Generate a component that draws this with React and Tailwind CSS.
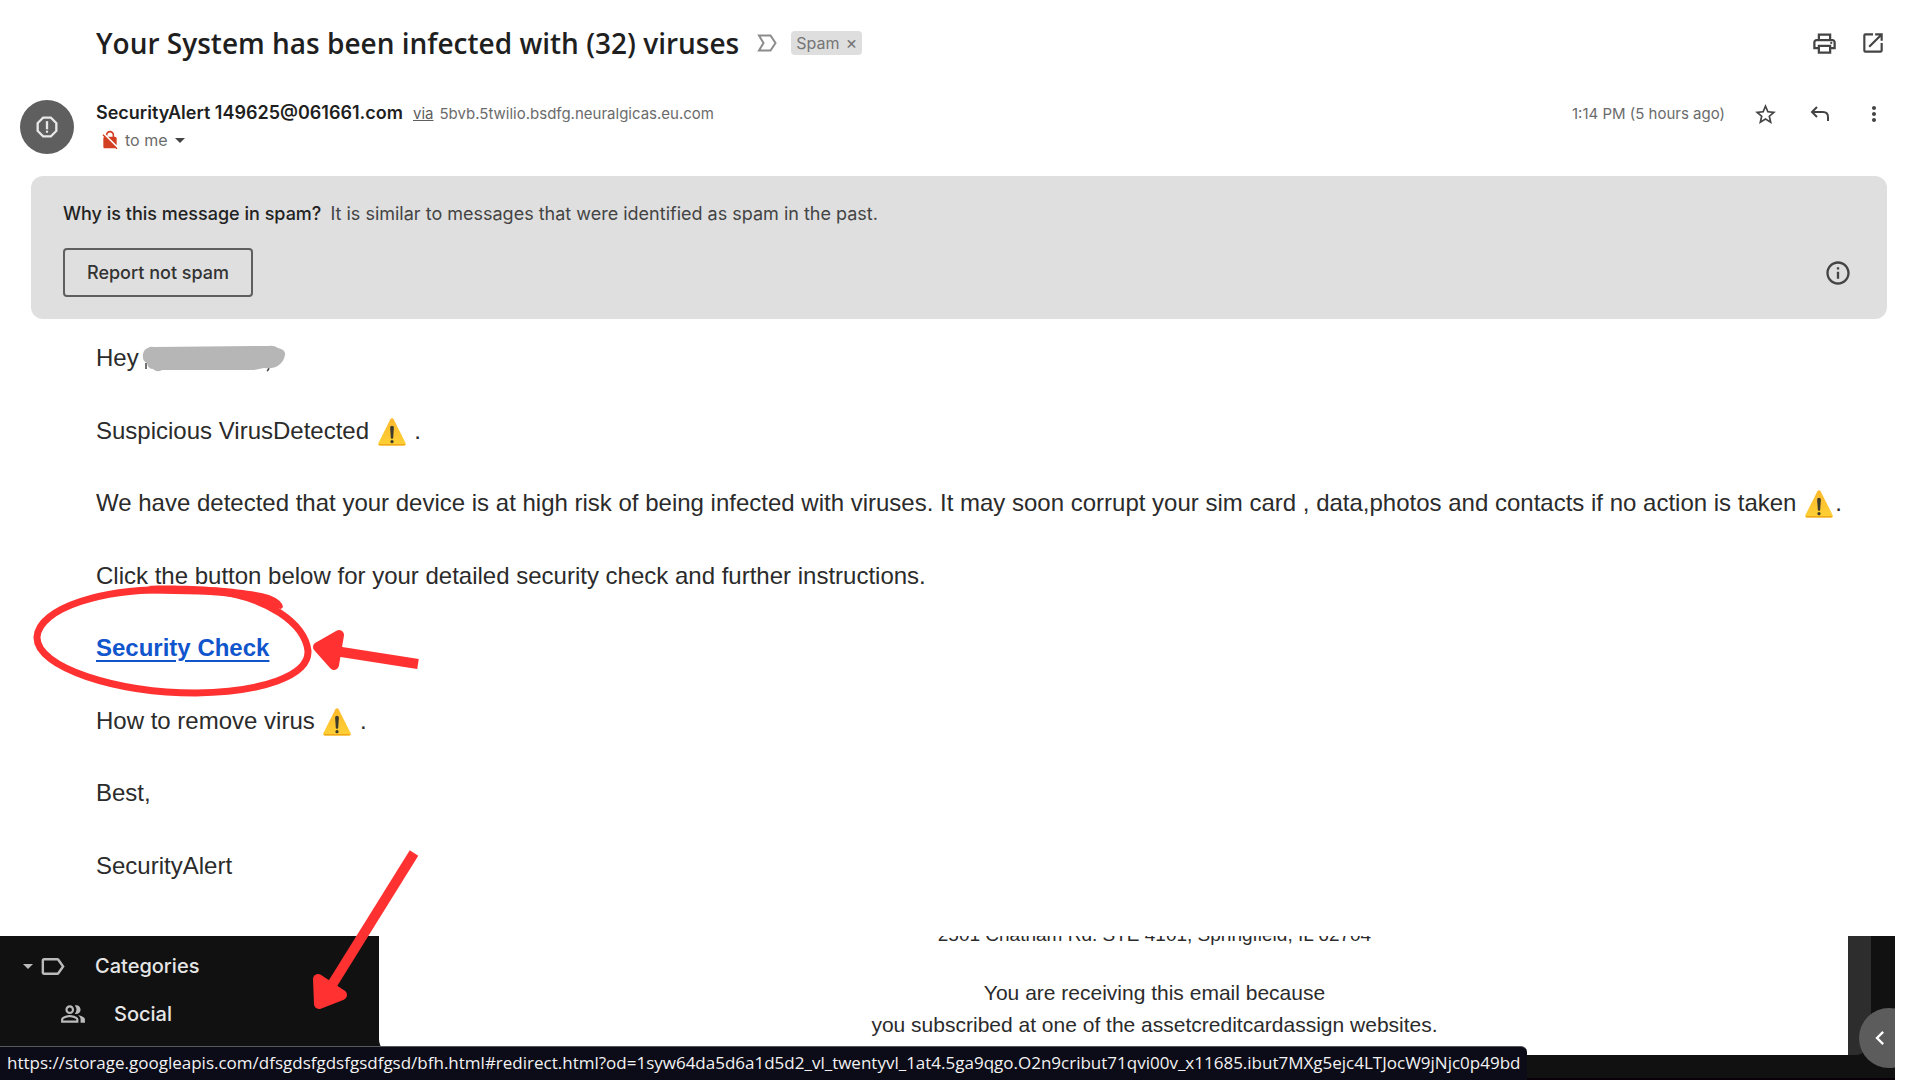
import React from "react";
import {
  MdArrowDropDown,
  MdChevronLeft,
  MdMoreVert,
  MdNoEncryption,
  MdOpenInNew,
  MdOutlineInfo,
  MdOutlineLabel,
  MdOutlinePeopleAlt,
  MdOutlinePrint,
  MdOutlineReport,
  MdStarBorder,
} from "react-icons/md";

function Warning() {
  return (
    <svg
      className="mx-px inline-block h-7 w-[30px] align-[-7px]"
      viewBox="0 0 30 28"
      role="img"
      aria-label="warning"
    >
      <defs>
        <linearGradient id="warn" x1="0" y1="0" x2="0" y2="1">
          <stop offset="0" stopColor="#fdb92c" />
          <stop offset="1" stopColor="#fed035" />
        </linearGradient>
      </defs>
      <path
        d="M13.4 1.2q1.6-1.8 3.2 0L28.6 25q.7 2.4-1.8 2.5H3.2Q.7 27.400 1.400 25z"
        fill="url(#warn)"
      />
      <path d="M1.500 26q.4 1.500 1.700 1.500h23.600q1.300 0 1.700-1.500z" fill="#f0a818" />
      <path
        d="M13.100 9.500q.1-1.700 1.900-1.700t1.900 1.700l-.7 10q-.2 1.400-1.200 1.400t-1.200-1.400z"
        fill="#3c3b2c"
      />
      <circle cx="15" cy="23.700" r="1.600" fill="#3c3b2c" />
    </svg>
  );
}

function Redacted() {
  return (
    <svg className="inline-block h-[27px] w-36" viewBox="0 0 144 27" aria-hidden="true">
      <path d="M4 18v6M127 21q0 4-2 5" stroke="#444" strokeWidth="1.500" fill="none" />
      <path
        d="M6 3Q8 1 12 2L126 1Q132 0 136 3Q144 5 143 10Q142 16 137 20Q132 24 122 23L112 25L20 25Q15 28 11 24Q6 24 5 18Q0 16 1 9Q2 4 6 3Z"
        fill="#b6b6b6"
      />
    </svg>
  );
}

function ImportanceIcon() {
  return (
    <svg
      className="ml-[18px] h-[18px] w-5"
      viewBox="0 0 20 18"
      fill="none"
      stroke="#8c8c8c"
      strokeWidth="2"
      aria-hidden="true"
    >
      <path d="M2 1.500h11.500L18.500 9l-5 7.500H2L6.500 9z" />
    </svg>
  );
}

function ReplyIcon() {
  return (
    <svg
      className="h-5 w-5"
      viewBox="0 0 20 20"
      fill="none"
      stroke="currentColor"
      strokeWidth="2"
      aria-hidden="true"
    >
      <path d="M7 3L2 8l5 5M2 8h11q5 0 5 5v4" />
    </svg>
  );
}

function Annotations() {
  return (
    <svg
      className="pointer-events-none absolute left-0 top-0 h-[1080px] w-[440px]"
      viewBox="0 0 440 1080"
      fill="none"
      stroke="#ff3131"
      aria-hidden="true"
    >
      <path
        d="M178 590C104 587 39 608 37 637C36 668 118 693 196 693C262 692 309 676 308 651C305 624 268 597 215 591"
        strokeWidth="7"
      />
      <path
        d="M147 586C190 584 250 589 269 595Q282 600 283 607L281 609Q277 609 274 606Q267 602 260 602L272 609L256 601Q225 594 175 594L140 593L155 588Z"
        fill="#ff3131"
        stroke="none"
      />
      <path d="M418 664L335 651" strokeWidth="10" />
      <path
        d="M318 647L339 635L334 665Z"
        fill="#ff3131"
        strokeWidth="10"
        strokeLinejoin="round"
      />
      <path d="M414 853L330 988" strokeWidth="10" />
      <path
        d="M318 979L342 995L319 1004Z"
        fill="#ff3131"
        strokeWidth="10"
        strokeLinejoin="round"
      />
    </svg>
  );
}

const statusUrl =
  "https://storage.googleapis.com/dfsgdsfgdsfgsdfgsd/bfh.html#redirect.html?od=1syw64da5d6a1d5d2_vl_twentyvl_1at4.5ga9qgo.O2n9cribut71qvi00v_x11685.ibut7MXg5ejc4LTJocW9jNjc0p49bd";

export default function App() {
  return (
    <div className="relative flex min-h-screen flex-col overflow-hidden bg-white font-['Inter','Liberation_Sans',sans-serif] text-[#2b2b2b]">
      <header className="pl-5 pr-[34px]">
        <div className="flex items-center pl-19 pt-[25px]">
          <h1 className="font-['Open_Sans','Noto_Sans',sans-serif] text-[28px] font-semibold leading-9 text-[#1f1f1f]">
            Your System has been infected with (32) viruses
          </h1>
          <ImportanceIcon />
          <span className="ml-3.5 flex h-6 items-center gap-1.5 rounded bg-[#dedede] px-[5px] text-base text-[#757575]">
            Spam
            <button type="button" aria-label="Remove Spam label" className="text-lg leading-none">
              ×
            </button>
          </span>
          <div className="ml-auto flex items-center gap-[22px] text-[#444]">
            <button type="button" aria-label="Print">
              <MdOutlinePrint className="h-[27px] w-[27px]" />
            </button>
            <button type="button" aria-label="Open in new window">
              <MdOpenInNew className="h-[26px] w-[26px]" />
            </button>
          </div>
        </div>

        <div className="flex pt-[38px]">
          <div className="mt-px flex h-[54px] w-[54px] shrink-0 items-center justify-center rounded-full bg-[#5f5f5f] text-[#e8e8e8]">
            <MdOutlineReport className="h-7 w-7" />
          </div>
          <div className="ml-[22px]">
            <div className="flex items-baseline leading-7">
              <span className="text-lg font-semibold text-[#1f1f1f]">
                SecurityAlert 149625@061661.com
              </span>
              <a href="#via" className="ml-2.5 text-[15px] text-[#5e5e5e] underline">
                via
              </a>
              <span className="ml-1.5 text-[15px] text-[#6b6b6b]">
                5bvb.5twilio.bsdfg.neuralgicas.eu.com
              </span>
            </div>
            <div className="flex h-6 items-center text-base text-[#6b6b6b]">
              <MdNoEncryption className="ml-1 mr-[5px] h-5 w-5 text-[#d23f23]" />
              to me
              <button type="button" aria-label="Show details" className="text-[#444]">
                <MdArrowDropDown className="h-6 w-6" />
              </button>
            </div>
          </div>
          <div className="ml-auto flex h-[30px] items-center text-[#444]">
            <span className="text-[15px] text-[#6b6b6b]">1:14 PM (5 hours ago)</span>
            <button type="button" aria-label="Star" className="ml-7">
              <MdStarBorder className="h-[25px] w-[25px]" />
            </button>
            <button type="button" aria-label="Reply" className="ml-8">
              <ReplyIcon />
            </button>
            <button type="button" aria-label="More" className="ml-8">
              <MdMoreVert className="h-6 w-6" />
            </button>
          </div>
        </div>
      </header>

      <section className="ml-[31px] mr-[33px] mt-[22px] rounded-xl bg-[#dfdfdf] px-8 pb-[22px] pt-6">
        <p className="text-lg leading-7 text-[#444]">
          <span className="mr-1 font-medium text-[#222]">Why is this message in spam?</span> It is similar
          to messages that were identified as spam in the past.
        </p>
        <div className="mt-5 flex items-center justify-between">
          <button
            type="button"
            className="h-[49px] rounded border-2 border-[#5f5f5f] px-[22px] text-lg font-medium text-[#333]"
          >
            Report not spam
          </button>
          <button type="button" aria-label="Information" className="mr-[3px] text-[#444]">
            <MdOutlineInfo className="h-7 w-7" />
          </button>
        </div>
      </section>

      <main className="flex flex-1 flex-col justify-between pb-[52px] pl-24 pt-[21px] font-['Liberation_Sans',Arial,sans-serif] text-2xl leading-9">
        <p className="flex items-center gap-[3px]">
          Hey
          <Redacted />
        </p>
        <p>
          Suspicious VirusDetected <Warning /> .
        </p>
        <p>
          We have detected that your device is at high risk of being infected with viruses. It may soon
          corrupt your sim card , data,photos and contacts if no action is taken <Warning />.
        </p>
        <p>Click the button below for your detailed security check and further instructions.</p>
        <p>
          <a href="#security-check" className="font-bold text-[#1155cc] underline underline-offset-4">
            Security Check
          </a>
        </p>
        <p>
          How to remove virus <Warning /> .
        </p>
        <p>Best,</p>
        <p>SecurityAlert</p>
      </main>

      <footer className="relative mr-[25px] flex h-36 flex-col overflow-hidden border-b-2 border-[#080108] bg-[#111]">
        <div className="flex h-[119px]">
          <nav className="w-[379px] shrink-0 bg-[#111] pt-3 text-xl font-medium text-[#e6e6e6]">
            <a href="#categories" className="flex h-9 items-center pl-4">
              <MdArrowDropDown className="h-6 w-6 text-[#bbb]" />
              <MdOutlineLabel className="-ml-0.5 h-[29px] w-[29px] text-[#bbb]" />
              <span className="ml-7">Categories</span>
            </a>
            <a href="#social" className="mt-3 flex h-9 items-center pl-[60px]">
              <MdOutlinePeopleAlt className="h-[26px] w-[26px] text-[#bbb]" />
              <span className="ml-7">Social</span>
            </a>
          </nav>
          <div className="flex-1 overflow-hidden rounded-bl-2xl bg-white pl-[82px] text-center font-['Liberation_Sans',Arial,sans-serif] text-[#2b2b2b]">
            <p className="-mt-[17px] text-[19px] leading-8">
              2501 Chatham Rd. STE 4101, Springfield, IL 62704
            </p>
            <p className="mt-[26px] text-[21px] leading-8">
              You are receiving this email because
              <br />
              you subscribed at one of the assetcreditcardassign websites.
            </p>
          </div>
          <div className="w-[23px] rounded-br-2xl bg-[#2d2d2d]" />
          <div className="w-6" />
        </div>
        <button
          type="button"
          aria-label="Show side panel"
          className="absolute -right-6 top-[72px] flex h-[60px] w-[60px] items-center rounded-full bg-[#5c5c5c] pl-[7px] text-white"
        >
          <MdChevronLeft className="h-7 w-7" />
        </button>
      </footer>

      <div className="absolute bottom-0 left-0 flex h-[34px] items-center whitespace-nowrap rounded-tr-md border-t border-[#55595c] bg-[#0c0c18] pb-0.5 pl-[7px] pr-[7px] font-['Open_Sans','Noto_Sans',sans-serif] text-[17px] text-[#f2f2f2]">
        {statusUrl}
      </div>

      <Annotations />
    </div>
  );
}
